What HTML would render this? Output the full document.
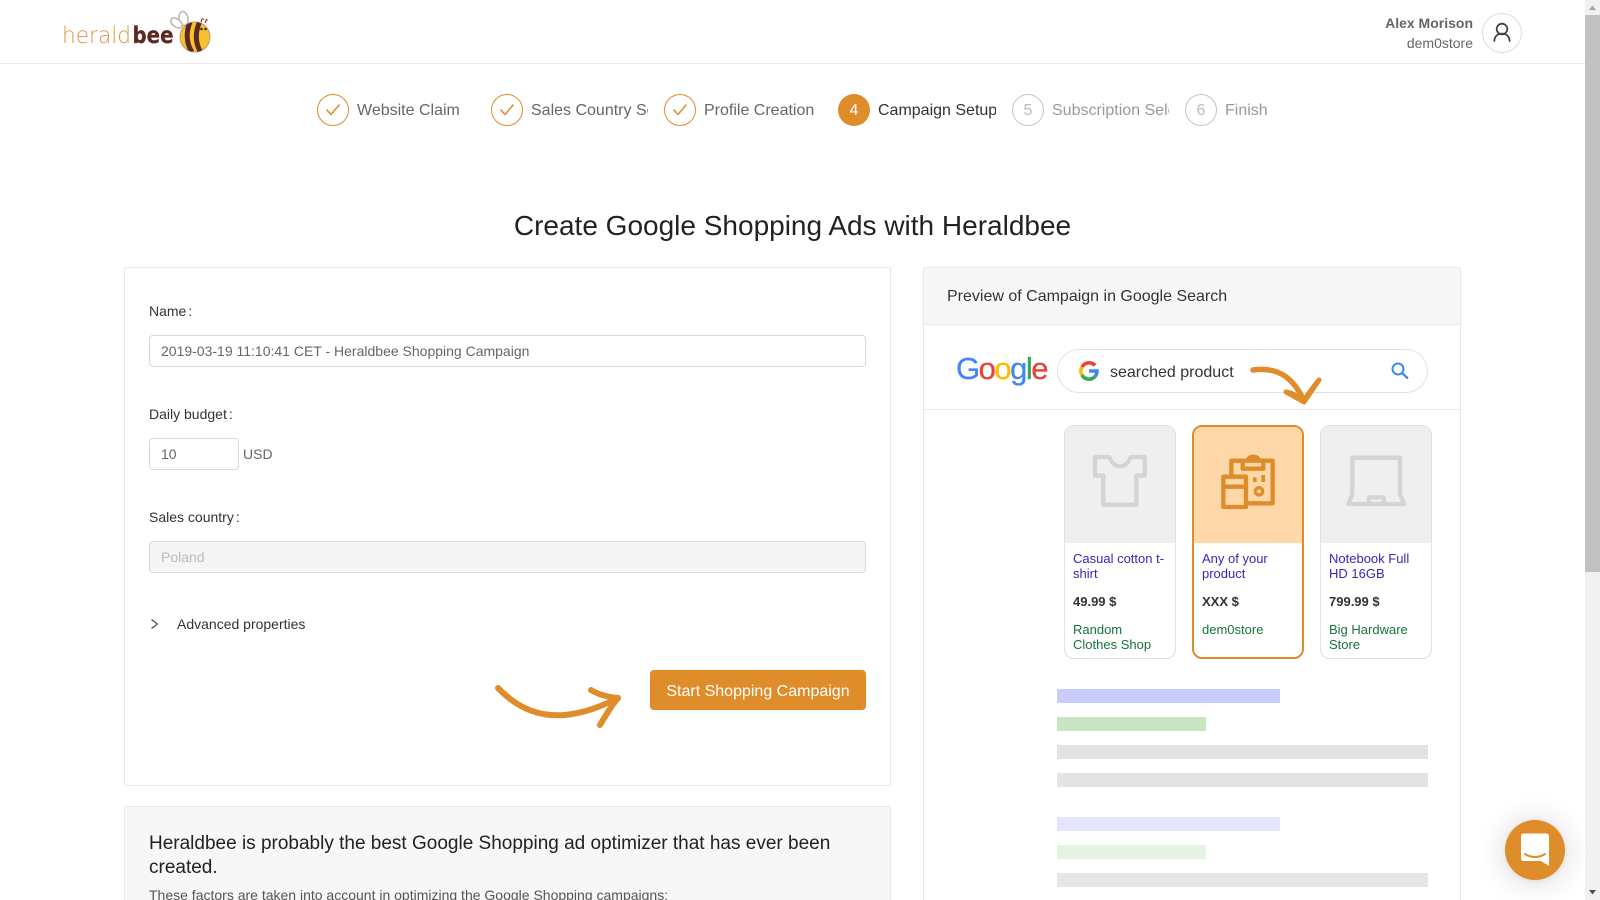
<!DOCTYPE html>
<html lang="en">
<head>
<meta charset="utf-8">
<title>Create Google Shopping Ads with Heraldbee</title>
<style>
html,body{margin:0;padding:0;width:1600px;height:900px;overflow:hidden;background:#fff;font-family:"Liberation Sans",sans-serif;}
#page{position:relative;width:1600px;height:900px;overflow:hidden;background:#fff;}
.a{position:absolute;white-space:nowrap;}
.t14{font-size:14px;line-height:20px;}
.label{color:#333;}
.label span{margin-left:2px;}
.input{position:absolute;box-sizing:border-box;height:32px;border:1px solid #d9d9d9;border-radius:4px;background:#fff;color:#666;font-size:14px;line-height:30px;padding-left:11px;white-space:nowrap;}
.circle{position:absolute;box-sizing:border-box;top:94px;width:32px;height:32px;border-radius:50%;text-align:center;font-size:16px;line-height:32px;}
.done{border:1px solid #df8c2a;}
.pend{border:1px solid #c4c4c4;color:#bbb;}
.st{position:absolute;top:98px;height:26px;font-size:16px;line-height:26px;white-space:nowrap;overflow:hidden;color:#666;}
.card{position:absolute;box-sizing:border-box;top:425px;height:234px;width:112px;border:1px solid #e0e0e6;border-radius:10px;background:#fff;overflow:hidden;}
.card .img{position:absolute;left:0;right:0;top:0;height:117px;background:#efefef;}
.ct{position:absolute;font-size:13px;line-height:15px;white-space:nowrap;}
.blue{color:#3528b5;}
.price{font-weight:bold;color:#333;}
.green{color:#17743a;}
.bar{position:absolute;height:14px;left:1057px;}
</style>
</head>
<body>
<div id="page">
<!-- header -->
<div class="a" style="left:0;top:0;width:1585px;height:64px;box-sizing:border-box;border-bottom:1px solid #e8e8e8;"></div>
<svg class="a" style="left:40px;top:0" width="200" height="65" viewBox="0 0 200 65">
  <defs><clipPath id="bd"><circle cx="155" cy="37" r="15"/></clipPath></defs>
  <text x="22" y="43" font-family="DejaVu Sans" font-weight="200" font-size="23" fill="#e0943a" textLength="69" lengthAdjust="spacingAndGlyphs">herald</text>
  <text x="92.500" y="43" font-family="DejaVu Sans" font-size="23" font-weight="bold" fill="#5d2a22" stroke="#5d2a22" stroke-width=".3" textLength="41" lengthAdjust="spacingAndGlyphs">bee</text>
  <ellipse cx="143.500" cy="18.500" rx="4.500" ry="7" transform="rotate(-10 143.500 18.500)" fill="#fff" stroke="#bbb5ae" stroke-width="1.500"/>
  <ellipse cx="136.500" cy="23" rx="6.500" ry="4" transform="rotate(35 136.500 23)" fill="#fff" stroke="#bbb5ae" stroke-width="1.500"/>
  <circle cx="155" cy="37" r="15" fill="#f6c12f" stroke="#b89a76" stroke-width="1"/>
  <g clip-path="url(#bd)"><path d="M150 22C146 32 146 43 152 52M160 21C155 32 155 43 161 53" stroke="#5d2a22" stroke-width="5" fill="none"/></g>
  <circle cx="161.500" cy="29" r="1.300" fill="#4a2a20"/><circle cx="165.500" cy="29" r="1.300" fill="#4a2a20"/>
  <path d="M161 22l1-3h2M165 23l1-2" stroke="#5d2a22" stroke-width="1.100" fill="none"/>
  <circle cx="166.500" cy="20" r="1.100" fill="#b5453a"/>
</svg>
<div class="a t14" style="right:127px;top:13px;font-weight:bold;color:#666;">Alex Morison</div>
<div class="a t14" style="right:127px;top:33px;color:#666;">dem0store</div>
<div class="a" style="left:1482px;top:13px;width:40px;height:40px;box-sizing:border-box;border:1px solid #ddd;border-radius:50%;"></div>
<svg class="a" style="left:1482px;top:13px" width="40" height="40" viewBox="0 0 40 40" fill="none" stroke="#444" stroke-width="1.800" stroke-linecap="round"><circle cx="20" cy="16" r="5.300"/><path d="M12.300 28c.4-5 3.600-7.300 7.700-7.300s7.300 2.300 7.700 7.300"/></svg>

<!-- steps -->
<div class="circle done" style="left:317px"></div>
<div class="circle done" style="left:491px"></div>
<div class="circle done" style="left:664px"></div>
<svg class="a" style="left:317px;top:94px" width="32" height="32" fill="none" stroke="#df8c2a" stroke-width="1.500"><path d="M9.500 15.500L14 20.500L22.500 10.500"/></svg>
<svg class="a" style="left:491px;top:94px" width="32" height="32" fill="none" stroke="#df8c2a" stroke-width="1.500"><path d="M9.500 15.500L14 20.500L22.500 10.500"/></svg>
<svg class="a" style="left:664px;top:94px" width="32" height="32" fill="none" stroke="#df8c2a" stroke-width="1.500"><path d="M9.500 15.500L14 20.500L22.500 10.500"/></svg>
<div class="st" style="left:357px;width:110px">Website Claim</div>
<div class="st" style="left:531px;width:117px">Sales Country Selection</div>
<div class="st" style="left:704px;width:125px">Profile Creation</div>
<div class="circle" style="left:838px;background:#df8c2a;color:#fff;line-height:33px;">4</div>
<div class="st" style="left:878px;width:118px;color:#333">Campaign Setup</div>
<div class="circle pend" style="left:1012px">5</div>
<div class="st" style="left:1052px;width:117px;color:#999">Subscription Selection</div>
<div class="circle pend" style="left:1185px">6</div>
<div class="st" style="left:1225px;width:60px;color:#999">Finish</div>

<div class="a" style="left:0;width:1585px;top:209px;text-align:center;font-size:28px;line-height:34px;color:#222;">Create Google Shopping Ads with Heraldbee</div>

<!-- left card -->
<div class="a" style="left:124px;top:267px;width:767px;height:519px;box-sizing:border-box;border:1px solid #e8e8e8;border-radius:2px;"></div>
<div class="a t14 label" style="left:149px;top:301px">Name<span>:</span></div>
<div class="input" style="left:149px;top:335px;width:717px">2019-03-19 11:10:41 CET - Heraldbee Shopping Campaign</div>
<div class="a t14 label" style="left:149px;top:404px">Daily budget<span>:</span></div>
<div class="input" style="left:149px;top:438px;width:90px">10</div>
<div class="a t14" style="left:243px;top:444px;color:#666">USD</div>
<div class="a t14 label" style="left:149px;top:507px">Sales country<span>:</span></div>
<div class="input" style="left:149px;top:541px;width:717px;background:#f5f5f5;color:#bbb">Poland</div>
<svg class="a" style="left:149px;top:617px" width="12" height="14" fill="none" stroke="#444" stroke-width="1.100"><path d="M2.500 2.500L8.500 7L2.500 11.500"/></svg>
<div class="a t14" style="left:177px;top:614px;color:#333">Advanced properties</div>
<svg class="a" style="left:480px;top:660px" width="160" height="80" fill="none" stroke="#df8c2a" stroke-linecap="round" stroke-linejoin="round"><path d="M18 28C38 49 60 57 85 55C105 53 122 46 138 38" stroke-width="6"/><path d="M111 30C119 35 128 37 138 38C131 46 126 55 120 65" stroke-width="6"/></svg>
<div class="a" style="left:650px;top:670px;width:216px;height:40px;background:#df8c2a;border-radius:4px;color:#fff;font-size:16px;line-height:44px;text-align:center;box-shadow:0 2px 0 rgba(0,0,0,.02);">Start Shopping Campaign</div>

<!-- bottom left card -->
<div class="a" style="left:124px;top:806px;width:767px;height:111px;box-sizing:border-box;border:1px solid #e8e8e8;border-radius:2px;background:#f7f7f7;"></div>
<div class="a" style="left:149px;top:832px;width:700px;font-size:19px;line-height:24px;color:#222;white-space:normal;">Heraldbee is probably the best Google Shopping ad optimizer that has ever been created.</div>
<div class="a t14" style="left:149px;top:885px;color:#555">These factors are taken into account in optimizing the Google Shopping campaigns:</div>

<!-- right card -->
<div class="a" style="left:923px;top:267px;width:538px;height:660px;box-sizing:border-box;border:1px solid #e8e8e8;border-radius:2px;"></div>
<div class="a" style="left:924px;top:268px;width:536px;height:57px;background:#f7f7f7;border-bottom:1px solid #e8e8e8;box-sizing:border-box;"></div>
<div class="a" style="left:947px;top:285px;font-size:16px;line-height:24px;color:#333;">Preview of Campaign in Google Search</div>
<div class="a" style="left:924px;top:409px;width:536px;height:1px;background:#e8e8e8;"></div>
<svg class="a" style="left:950px;top:345px" width="105" height="50" font-family="Liberation Sans" font-size="31" letter-spacing="-1.500" stroke-width=".3"><text x="6" y="34"><tspan fill="#4285f4" stroke="#4285f4">G</tspan><tspan fill="#ea4335" stroke="#ea4335">o</tspan><tspan fill="#fbbc05" stroke="#fbbc05">o</tspan><tspan fill="#4285f4" stroke="#4285f4">g</tspan><tspan fill="#34a853" stroke="#34a853">l</tspan><tspan fill="#ea4335" stroke="#ea4335">e</tspan></text></svg>
<div class="a" style="left:1057px;top:349px;width:371px;height:44px;box-sizing:border-box;border:1px solid #dfe1e5;border-radius:22px;background:#fff;"></div>
<svg class="a" style="left:1079px;top:361px" width="20" height="20" viewBox="0 0 20 20" fill="none" stroke-width="3.600"><path d="M16 4.500A8 8 0 0 0 3 6" stroke="#ea4335"/><path d="M3 6A8 8 0 0 0 3 14" stroke="#fbbc05"/><path d="M3 14A8 8 0 0 0 16 15.500" stroke="#34a853"/><path d="M16 15.500C17.500 14 18 12 18 10H10" stroke="#4285f4"/></svg>
<div class="a" style="left:1110px;top:361px;font-size:16px;line-height:24px;color:#333;">searched product</div>
<svg class="a" style="left:1388px;top:359px" width="24" height="24" fill="none" stroke="#4285f4" stroke-width="2"><circle cx="10" cy="10" r="5.500"/><path d="M14 14L20 19.500" stroke-width="2.300"/></svg>

<div class="card" style="left:1064px"><div class="img"></div>
  <div class="ct blue" style="left:8px;top:125px">Casual cotton t-<br>shirt</div>
  <div class="ct price" style="left:8px;top:168px">49.99 $</div>
  <div class="ct green" style="left:8px;top:196px">Random<br>Clothes Shop</div>
</div>
<div class="card" style="left:1192px;width:112px;border:2px solid #df8c2a;"><div class="img" style="background:#fed8a9;height:116px"></div>
  <div class="ct blue" style="left:8px;top:124px">Any of your<br>product</div>
  <div class="ct price" style="left:8px;top:167px">XXX $</div>
  <div class="ct green" style="left:8px;top:195px">dem0store</div>
</div>
<div class="card" style="left:1320px"><div class="img"></div>
  <div class="ct blue" style="left:8px;top:125px">Notebook Full<br>HD 16GB</div>
  <div class="ct price" style="left:8px;top:168px">799.99 $</div>
  <div class="ct green" style="left:8px;top:196px">Big Hardware<br>Store</div>
</div>
<svg class="a" style="left:1050px;top:420px" width="380" height="130" viewBox="0 0 1140 390" fill="none" stroke-width="13" stroke-linejoin="round">
  <path d="M178 111C190 148 230 148 242 111H284V167H259V254H160V167H135V111Z" stroke="#d4d4d4"/>
  <path d="M895 252L907 222V113H1050V222L1062 252ZM955 250L958 232H1000L1003 250" stroke="#d4d4d4"/>
  <g stroke="#df8c2a">
    <path d="M544 165V122H668V250H592"/>
    <path d="M578 122V146H640V122M594 122C594 106 626 106 626 122"/>
    <rect x="520" y="170" width="68" height="91"/>
    <path d="M520 200H588"/>
    <circle cx="627" cy="214" r="11" stroke-width="10"/>
  </g>
  <rect x="609" y="172" width="11" height="14" fill="#df8c2a"/>
  <rect x="634" y="165" width="11" height="21" fill="#df8c2a"/>
</svg>
<svg class="a" style="left:1240px;top:355px" width="90" height="60" fill="none" stroke="#df8c2a" stroke-linecap="round" stroke-linejoin="round"><path d="M13 15C35 12 52 20 63 44" stroke-width="5.500"/><path d="M46 37C53 38 58 42 63 46C68 40 73 32 79 25L64 47Z" fill="#df8c2a" stroke-width="5"/></svg>

<div class="bar" style="top:689px;width:223px;background:#c8ccfb"></div>
<div class="bar" style="top:717px;width:149px;background:#c8e6c2"></div>
<div class="bar" style="top:745px;width:371px;background:#e3e3e3"></div>
<div class="bar" style="top:773px;width:371px;background:#e3e3e3"></div>
<div class="bar" style="top:817px;width:223px;background:#e4e6fd"></div>
<div class="bar" style="top:845px;width:149px;background:#e5f3e2"></div>
<div class="bar" style="top:873px;width:371px;background:#e6e6e6"></div>

<!-- chat widget -->
<div class="a" style="left:1505px;top:820px;width:60px;height:60px;border-radius:50%;background:#df8c2a;box-shadow:0 1px 6px rgba(0,0,0,.06),0 2px 32px rgba(0,0,0,.16);"></div>
<svg class="a" style="left:1515px;top:830px" width="40" height="40" viewBox="0 0 40 40"><path d="M9 3.500H31Q34 3.500 34 6.500V36L26 31H9Q6 31 6 28V6.500Q6 3.500 9 3.500Z" fill="#fff"/><path d="M10 24C16 28 24 28 30 24" fill="none" stroke="#df8c2a" stroke-width="2" stroke-linecap="round"/></svg>

<!-- scrollbar -->
<div class="a" style="left:1585px;top:0;width:15px;height:900px;background:#f1f1f1;"></div>
<div class="a" style="left:1585px;top:15px;width:15px;height:557px;background:#c1c1c1;"></div>
<svg class="a" style="left:1585px;top:0" width="15" height="900"><path d="M4 10L7.500 5.500L11 10Z" fill="#a3a3a3"/><path d="M4 890L7.500 894.500L11 890Z" fill="#505050"/></svg>
</div>
</body>
</html>
